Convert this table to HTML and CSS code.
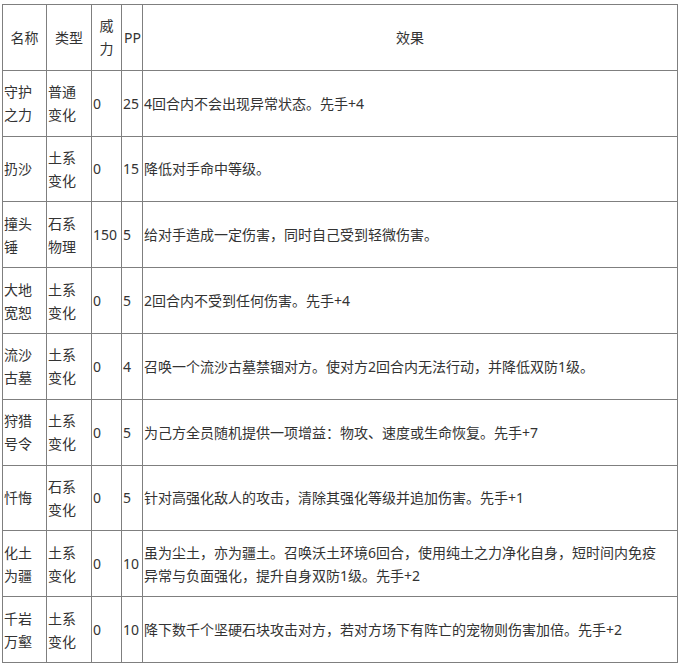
FILE: index.html
```html
<!DOCTYPE html>
<html lang="zh-CN">
<head>
<meta charset="utf-8">
<title>技能表</title>
<link rel="stylesheet" href="styles.css">
</head>
<body>
<table class="skills">
  <colgroup>
    <col class="c-name">
    <col class="c-type">
    <col class="c-power">
    <col class="c-pp">
    <col class="c-effect">
  </colgroup>
  <tr class="head">
    <td>名称</td>
    <td>类型</td>
    <td>威力</td>
    <td>PP</td>
    <td>效果</td>
  </tr>
  <tr>
    <td>守护之力</td>
    <td>普通变化</td>
    <td>0</td>
    <td>25</td>
    <td>4回合内不会出现异常状态。先手+4</td>
  </tr>
  <tr>
    <td>扔沙</td>
    <td>土系变化</td>
    <td>0</td>
    <td>15</td>
    <td>降低对手命中等级。</td>
  </tr>
  <tr>
    <td>撞头锤</td>
    <td>石系物理</td>
    <td>150</td>
    <td>5</td>
    <td>给对手造成一定伤害，同时自己受到轻微伤害。</td>
  </tr>
  <tr>
    <td>大地宽恕</td>
    <td>土系变化</td>
    <td>0</td>
    <td>5</td>
    <td>2回合内不受到任何伤害。先手+4</td>
  </tr>
  <tr>
    <td>流沙古墓</td>
    <td>土系变化</td>
    <td>0</td>
    <td>4</td>
    <td>召唤一个流沙古墓禁锢对方。使对方2回合内无法行动，并降低双防1级。</td>
  </tr>
  <tr>
    <td>狩猎号令</td>
    <td>土系变化</td>
    <td>0</td>
    <td>5</td>
    <td>为己方全员随机提供一项增益：物攻、速度或生命恢复。先手+7</td>
  </tr>
  <tr>
    <td>忏悔</td>
    <td>石系变化</td>
    <td>0</td>
    <td>5</td>
    <td>针对高强化敌人的攻击，清除其强化等级并追加伤害。先手+1</td>
  </tr>
  <tr>
    <td>化土为疆</td>
    <td>土系变化</td>
    <td>0</td>
    <td>10</td>
    <td>虽为尘土，亦为疆土。召唤沃土环境6回合，使用纯土之力净化自身，短时间内免疫<br>异常与负面强化，提升自身双防1级。先手+2</td>
  </tr>
  <tr>
    <td>千岩万壑</td>
    <td>土系变化</td>
    <td>0</td>
    <td>10</td>
    <td>降下数千个坚硬石块攻击对方，若对方场下有阵亡的宠物则伤害加倍。先手+2</td>
  </tr>
</table>
</body>
</html>
```

FILE: styles.css
```css
html, body {
  margin: 0;
  padding: 0;
  background: #ffffff;
}

body {
  padding: 4px 0 0 2px;
  font-family: "Noto Sans", "Noto Sans CJK SC", sans-serif;
  font-size: 14px;
  line-height: 23px;
  color: #333333;
}

.skills {
  border-collapse: collapse;
  table-layout: fixed;
  width: 675px;
  height: 659px;
}

.skills td {
  border: 1px solid #7f7f7f;
  padding: 0 3px 0 1px;
  vertical-align: middle;
  text-align: left;
  white-space: normal;
}

.skills .head td {
  text-align: center;
  padding: 0 2px;
}

.c-name { width: 44px; }
.c-type { width: 45px; }
.c-power { width: 30px; }
.c-pp { width: 21px; }
.c-effect { width: 535px; }
```
